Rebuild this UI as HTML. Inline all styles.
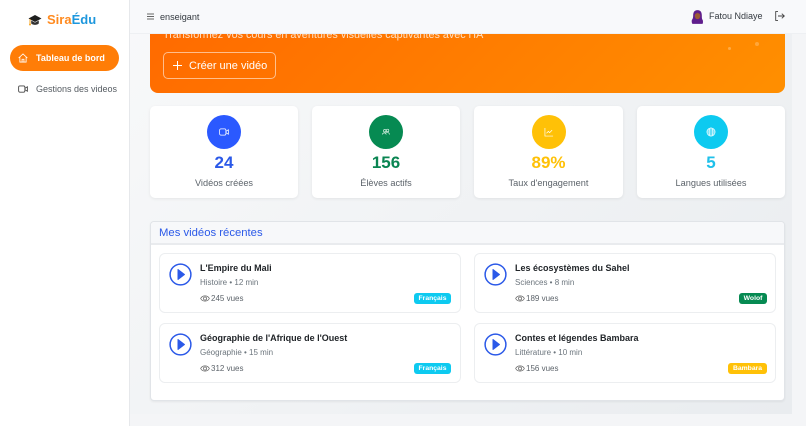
<!DOCTYPE html>
<html lang="fr">
<head>
<meta charset="utf-8">
<title>SiraÉdu</title>
<style>
*{box-sizing:border-box;margin:0;padding:0}
html,body{width:806px;height:426px;overflow:hidden;background:#f4f5f7;font-family:"Liberation Sans",sans-serif;color:#212529}
.a{position:absolute}
.t{position:absolute;white-space:nowrap;line-height:14px}
#side{left:0;top:0;width:130px;height:426px;background:#fff;border-right:1px solid #e6e8eb}
#main{left:130px;top:0;width:662px;height:414px;background:linear-gradient(135deg,#f8f9fa 0%,#e9ecef 100%)}
#nav{left:130px;top:0;width:676px;height:34px;background:#f8f9fb;border-bottom:1px solid #eef0f3}
#hero{left:150px;top:20px;width:635px;height:73px;border-radius:8px;background:linear-gradient(135deg,#ff6a00 0%,#ff8f00 100%)}
.stat{position:absolute;top:106px;height:92px;background:#fff;border-radius:5px;box-shadow:0 1px 3px rgba(0,0,0,.07);text-align:center}
.circ{position:absolute;left:50%;top:9px;width:34px;height:34px;margin-left:-17px;border-radius:50%}
.circ svg{position:absolute;left:12px;top:12px}
.num{position:absolute;left:0;right:0;top:47px;font-size:17px;line-height:20px;font-weight:700}
.lab{position:absolute;left:0;right:0;top:71px;font-size:9.2px;line-height:13px;color:#5c636a}
#sec{left:150px;top:221px;width:635px;height:180px;background:#fff;border:1px solid #e1e4e8;border-radius:4px;box-shadow:0 1px 2px rgba(0,0,0,.06)}
#sech{left:0;top:0;width:633px;height:23px;background:#f7f8fa;border-bottom:2px solid #e9ebee;border-radius:4px 4px 0 0}
.vc{position:absolute;background:#fff;border:1px solid #eceef0;border-radius:6px;height:60px}
.vc svg.p{position:absolute;left:9px;top:9px}
.vt{position:absolute;left:40px;top:7px;font-size:9px;line-height:14px;font-weight:700;color:#212529;white-space:nowrap}
.vm{position:absolute;left:40px;top:22px;font-size:8px;line-height:13px;color:#6c757d;white-space:nowrap}
.vv{position:absolute;left:51px;top:38px;font-size:8px;line-height:13px;color:#5c636a;white-space:nowrap}
.vc svg.e{position:absolute;left:40px;top:40px}
.bd{position:absolute;top:39px;height:11px;border-radius:3px;color:#fff;font-size:6.8px;line-height:11px;font-weight:700;text-align:center}
</style>
</head>
<body>
<div class="a" id="main"></div>
<div class="a" id="side">
  <svg class="a" style="left:28px;top:13px" width="14" height="14" viewBox="0 0 14 14"><path d="M7 2 L13.5 5.5 L7 9 L.5 5.5Z" fill="#1f1f1f"/><path d="M3.2 7.5V10.5C5 12.3 9 12.3 10.8 10.5V7.5L7 9.6Z" fill="#333"/><path d="M2 6V11" stroke="#f5a623" stroke-width="1"/><circle cx="2" cy="11.5" r="1" fill="#f5a623"/></svg>
  <div class="t" style="left:47px;top:10px;font-size:13px;line-height:20px;font-weight:700;color:#ff8a1f">Sira<span style="color:#1d97dd">Édu</span></div>
  <div class="a" style="left:10px;top:45px;width:109px;height:26px;border-radius:13px;background:#ff7d07"></div>
  <svg class="a" style="left:18px;top:53px" width="10" height="10" viewBox="0 0 16 16" fill="none" stroke="#fff" stroke-width="1.3"><path d="M1 8 8 1.5 15 8M3 6.5V14.5H13V6.5M6.5 14.5V10H9.5V14.5"/></svg>
  <div class="t" style="left:36px;top:51px;font-size:9px;font-weight:700;color:#fff">Tableau de bord</div>
  <svg class="a" style="left:18px;top:84px" width="10" height="10" viewBox="0 0 16 16" fill="none" stroke="#444" stroke-width="1.4"><rect x="1" y="3" width="10" height="10" rx="2"/><path d="M11 7 15 4.5V11.5L11 9"/></svg>
  <div class="t" style="left:36px;top:82px;font-size:9px;color:#555b61">Gestions des videos</div>
</div>
<div class="a" id="hero">
  <div class="t" style="left:13px;top:8px;font-size:10.8px;color:#ffe0c2">Transformez vos cours en aventures visuelles captivantes avec l'IA</div>
  <div class="a" style="left:13px;top:32px;width:113px;height:27px;border:1px solid rgba(255,255,255,.55);border-radius:5px"></div>
  <svg class="a" style="left:23px;top:41px" width="9" height="9" viewBox="0 0 9 9" stroke="#fff" stroke-width="1"><path d="M4.5 0V9M0 4.5H9"/></svg>
  <div class="t" style="left:39px;top:39px;font-size:11px;color:#fff">Créer une vidéo</div>
  <div class="a" style="left:578px;top:27px;width:3px;height:3px;border-radius:50%;background:#ffab45"></div>
  <div class="a" style="left:605px;top:22px;width:4px;height:4px;border-radius:50%;background:#ffa63a"></div>
</div>
<div class="a" id="nav">
  <svg class="a" style="left:17px;top:13px" width="7" height="7" viewBox="0 0 7 7" stroke="#666" stroke-width=".9"><path d="M0 1H7M0 3.5H7M0 6H7"/></svg>
  <div class="t" style="left:30px;top:10px;font-size:9.1px;color:#343a40">enseigant</div>
  <svg class="a" style="left:561px;top:9px" width="13" height="16" viewBox="0 0 15 16"><path d="M7.5 0C3.5 0 2.5 3 2.5 6.5C2.5 9 2 10 1 11.5C.5 13 1 16 2 16H13C14 16 14 13 13.5 11.5C12.5 10 12.5 9 12.5 6.5C12.5 3 11.5 0 7.5 0Z" fill="#5f1d8c"/><ellipse cx="7.5" cy="6.8" rx="3.2" ry="3.7" fill="#9c5a34"/><path d="M4.2 5C5.5 3.2 9.5 3.2 10.8 5L10.8 3.6L4.2 3.6Z" fill="#5f1d8c"/></svg>
  <div class="t" style="left:579px;top:9px;font-size:9px;color:#343a40">Fatou Ndiaye</div>
  <svg class="a" style="left:645px;top:11px" width="10" height="10" viewBox="0 0 10 10" fill="none" stroke="#444" stroke-width=".9"><path d="M3 .6H.7V9.4H3M3 5H9.3M6.8 2.7 9.3 5 6.8 7.3"/></svg>
</div>

<div class="stat" style="left:150px;width:148px">
  <div class="circ" style="background:#2b59ff"><svg width="10" height="10" viewBox="0 0 16 16" fill="none" stroke="#fff" stroke-width="1.2"><rect x="1" y="3" width="10" height="10" rx="2"/><path d="M11 7 15 4.5V11.5L11 9"/></svg></div>
  <div class="num" style="color:#2b59e8">24</div><div class="lab">Vidéos créées</div>
</div>
<div class="stat" style="left:312px;width:148px">
  <div class="circ" style="background:#068a52"><svg width="10" height="10" viewBox="0 0 16 16" fill="none" stroke="#d7efe3" stroke-width="1.1"><circle cx="6" cy="6" r="2"/><circle cx="10.5" cy="5.5" r="2"/><path d="M2 12C3 9 7 8 8.5 12M7.5 9C9 7.5 12.5 8 14 12"/></svg></div>
  <div class="num" style="color:#0a8552">156</div><div class="lab">Élèves actifs</div>
</div>
<div class="stat" style="left:474px;width:149px">
  <div class="circ" style="background:#ffc107"><svg width="10" height="10" viewBox="0 0 16 16" fill="none" stroke="#fff" stroke-width="1.1"><path d="M1.5 1.5V14.5H14.5M4 10 7 7 9 9 13 5"/></svg></div>
  <div class="num" style="color:#ffc107">89%</div><div class="lab">Taux d'engagement</div>
</div>
<div class="stat" style="left:637px;width:148px">
  <div class="circ" style="background:#0dcaf0"><svg width="10" height="10" viewBox="0 0 16 16" fill="none" stroke="#fff" stroke-width="1.1"><circle cx="8" cy="8" r="6.5"/><ellipse cx="8" cy="8" rx="3" ry="6.5"/><path d="M1.5 8H14.5M2.5 4.8H13.5M2.5 11.2H13.5"/></svg></div>
  <div class="num" style="color:#1fc0ea">5</div><div class="lab">Langues utilisées</div>
</div>

<div class="a" id="sec">
  <div class="a" id="sech"><div class="t" style="left:8px;top:3px;font-size:11.3px;line-height:16px;color:#2b59e8">Mes vidéos récentes</div></div>

  <div class="vc" style="left:8px;top:31px;width:302px">
    <svg class="p" width="23" height="23" viewBox="0 0 23 23"><circle cx="11.5" cy="11.5" r="10.4" fill="none" stroke="#2b59e8" stroke-width="1.5"/><path d="M9 6.5 15.5 11.5 9 16.5Z" fill="#2b59e8" stroke="#2b59e8" stroke-linejoin="round"/></svg>
    <div class="vt">L'Empire du Mali</div><div class="vm">Histoire • 12 min</div>
    <svg class="e" width="10" height="9" viewBox="0 0 16 14" fill="none" stroke="#666" stroke-width="1.2"><path d="M1 7C4 1.5 12 1.5 15 7C12 12.5 4 12.5 1 7Z"/><circle cx="8" cy="7" r="2.5"/></svg>
    <div class="vv">245 vues</div><div class="bd" style="left:254px;width:37px;background:#0dcaf0">Français</div>
  </div>
  <div class="vc" style="left:323px;top:31px;width:302px">
    <svg class="p" width="23" height="23" viewBox="0 0 23 23"><circle cx="11.5" cy="11.5" r="10.4" fill="none" stroke="#2b59e8" stroke-width="1.5"/><path d="M9 6.5 15.5 11.5 9 16.5Z" fill="#2b59e8" stroke="#2b59e8" stroke-linejoin="round"/></svg>
    <div class="vt">Les écosystèmes du Sahel</div><div class="vm">Sciences • 8 min</div>
    <svg class="e" width="10" height="9" viewBox="0 0 16 14" fill="none" stroke="#666" stroke-width="1.2"><path d="M1 7C4 1.5 12 1.5 15 7C12 12.5 4 12.5 1 7Z"/><circle cx="8" cy="7" r="2.5"/></svg>
    <div class="vv">189 vues</div><div class="bd" style="left:264px;width:28px;background:#068a52">Wolof</div>
  </div>
  <div class="vc" style="left:8px;top:101px;width:302px">
    <svg class="p" width="23" height="23" viewBox="0 0 23 23"><circle cx="11.5" cy="11.5" r="10.4" fill="none" stroke="#2b59e8" stroke-width="1.5"/><path d="M9 6.5 15.5 11.5 9 16.5Z" fill="#2b59e8" stroke="#2b59e8" stroke-linejoin="round"/></svg>
    <div class="vt">Géographie de l'Afrique de l'Ouest</div><div class="vm">Géographie • 15 min</div>
    <svg class="e" width="10" height="9" viewBox="0 0 16 14" fill="none" stroke="#666" stroke-width="1.2"><path d="M1 7C4 1.5 12 1.5 15 7C12 12.5 4 12.5 1 7Z"/><circle cx="8" cy="7" r="2.5"/></svg>
    <div class="vv">312 vues</div><div class="bd" style="left:254px;width:37px;background:#0dcaf0">Français</div>
  </div>
  <div class="vc" style="left:323px;top:101px;width:302px">
    <svg class="p" width="23" height="23" viewBox="0 0 23 23"><circle cx="11.5" cy="11.5" r="10.4" fill="none" stroke="#2b59e8" stroke-width="1.5"/><path d="M9 6.5 15.5 11.5 9 16.5Z" fill="#2b59e8" stroke="#2b59e8" stroke-linejoin="round"/></svg>
    <div class="vt">Contes et légendes Bambara</div><div class="vm">Littérature • 10 min</div>
    <svg class="e" width="10" height="9" viewBox="0 0 16 14" fill="none" stroke="#666" stroke-width="1.2"><path d="M1 7C4 1.5 12 1.5 15 7C12 12.5 4 12.5 1 7Z"/><circle cx="8" cy="7" r="2.5"/></svg>
    <div class="vv">156 vues</div><div class="bd" style="left:253px;width:39px;background:#ffc107">Bambara</div>
  </div>
</div>
</body>
</html>
